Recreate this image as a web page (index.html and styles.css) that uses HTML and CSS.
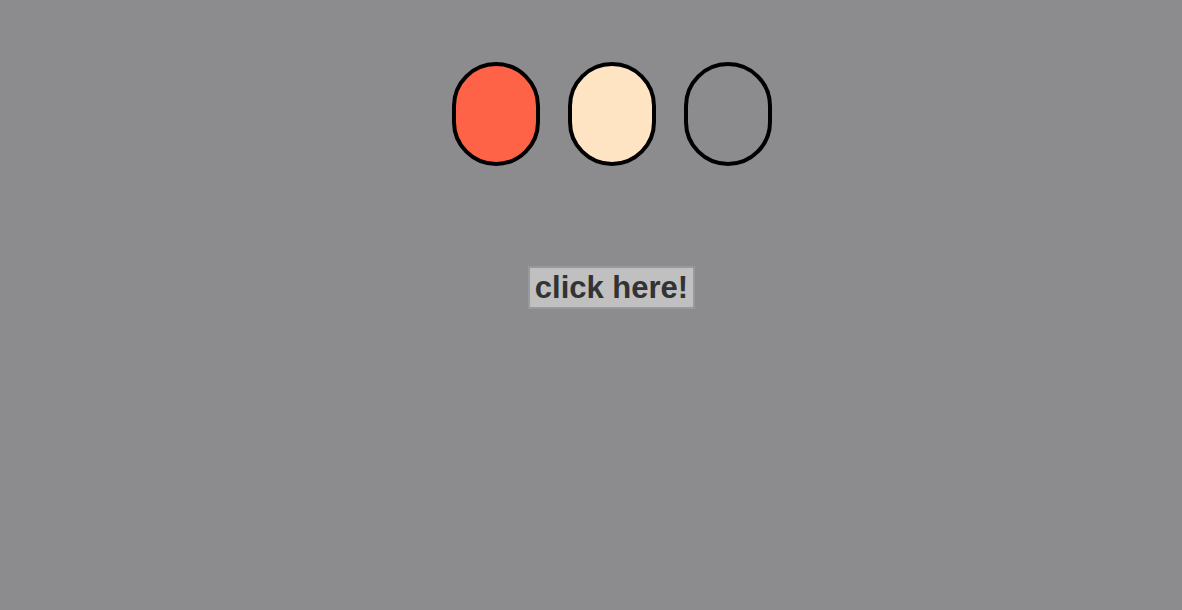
FILE: index.html
```html
<!DOCTYPE html>
<html>
<head>
<meta charset="utf-8">
<link rel="stylesheet" href="styles.css">
</head>
<body>
<div class="page">
  <div class="lights">
    <div class="light red"></div>
    <div class="light beige"></div>
    <div class="light off"></div>
  </div>
  <div class="actions">
    <button class="btn">click here!</button>
  </div>
</div>
</body>
</html>
```
FILE: styles.css
```css
html, body {
  margin: 0;
  padding: 0;
  background: #8c8c8e;
  height: 100%;
}
.page {
  padding-left: 41px;
  padding-top: 62px;
  display: flex;
  flex-direction: column;
  align-items: center;
}
.lights {
  display: flex;
  gap: 28px;
}
.light {
  width: 80px;
  height: 96px;
  border: 4px solid #000;
  border-radius: 44px;
}
.red { background: #ff6347; }
.beige { background: #ffe4c4; }
.off { background: transparent; }
.actions {
  margin-top: 100px;
}
.btn {
  font-family: "Liberation Sans", Arial, sans-serif;
  font-size: 31px;
  font-weight: bold;
  line-height: 37px;
  color: #333;
  background: #c0c0c0;
  border: 2px solid #999;
  padding: 1px 5px;
  margin: 0;
}
```
